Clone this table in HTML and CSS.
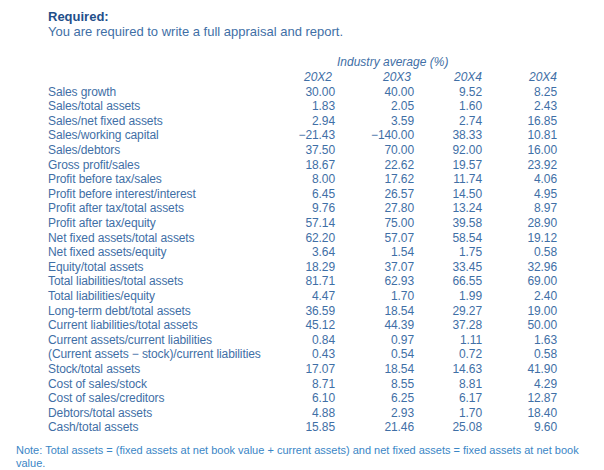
FILE: index.html
```html
<!DOCTYPE html>
<html>
<head>
<meta charset="utf-8">
<link rel="stylesheet" href="styles.css">
</head>
<body>
<div class="page">
  <div class="required">
    <div class="req-title">Required:</div>
    <div class="req-text">You are required to write a full appraisal and report.</div>
  </div>
  <div class="table">
    <div class="caption-row">
      <span class="label"></span>
      <span class="caption">Industry average (%)</span>
    </div>
    <div class="row head">
      <span class="label"></span>
      <span class="num y1">20X2</span><span class="num y2">20X3</span><span class="num">20X4</span><span class="num">20X4</span>
    </div>
    <div class="row"><span class="label">Sales growth</span><span class="num">30.00</span><span class="num">40.00</span><span class="num">9.52</span><span class="num">8.25</span></div>
    <div class="row"><span class="label">Sales/total assets</span><span class="num">1.83</span><span class="num">2.05</span><span class="num">1.60</span><span class="num">2.43</span></div>
    <div class="row"><span class="label">Sales/net fixed assets</span><span class="num">2.94</span><span class="num">3.59</span><span class="num">2.74</span><span class="num">16.85</span></div>
    <div class="row"><span class="label">Sales/working capital</span><span class="num">−21.43</span><span class="num">−140.00</span><span class="num">38.33</span><span class="num">10.81</span></div>
    <div class="row"><span class="label">Sales/debtors</span><span class="num">37.50</span><span class="num">70.00</span><span class="num">92.00</span><span class="num">16.00</span></div>
    <div class="row"><span class="label">Gross profit/sales</span><span class="num">18.67</span><span class="num">22.62</span><span class="num">19.57</span><span class="num">23.92</span></div>
    <div class="row"><span class="label">Profit before tax/sales</span><span class="num">8.00</span><span class="num">17.62</span><span class="num">11.74</span><span class="num">4.06</span></div>
    <div class="row"><span class="label">Profit before interest/interest</span><span class="num">6.45</span><span class="num">26.57</span><span class="num">14.50</span><span class="num">4.95</span></div>
    <div class="row"><span class="label">Profit after tax/total assets</span><span class="num">9.76</span><span class="num">27.80</span><span class="num">13.24</span><span class="num">8.97</span></div>
    <div class="row"><span class="label">Profit after tax/equity</span><span class="num">57.14</span><span class="num">75.00</span><span class="num">39.58</span><span class="num">28.90</span></div>
    <div class="row"><span class="label">Net fixed assets/total assets</span><span class="num">62.20</span><span class="num">57.07</span><span class="num">58.54</span><span class="num">19.12</span></div>
    <div class="row"><span class="label">Net fixed assets/equity</span><span class="num">3.64</span><span class="num">1.54</span><span class="num">1.75</span><span class="num">0.58</span></div>
    <div class="row"><span class="label">Equity/total assets</span><span class="num">18.29</span><span class="num">37.07</span><span class="num">33.45</span><span class="num">32.96</span></div>
    <div class="row"><span class="label">Total liabilities/total assets</span><span class="num">81.71</span><span class="num">62.93</span><span class="num">66.55</span><span class="num">69.00</span></div>
    <div class="row"><span class="label">Total liabilities/equity</span><span class="num">4.47</span><span class="num">1.70</span><span class="num">1.99</span><span class="num">2.40</span></div>
    <div class="row"><span class="label">Long-term debt/total assets</span><span class="num">36.59</span><span class="num">18.54</span><span class="num">29.27</span><span class="num">19.00</span></div>
    <div class="row"><span class="label">Current liabilities/total assets</span><span class="num">45.12</span><span class="num">44.39</span><span class="num">37.28</span><span class="num">50.00</span></div>
    <div class="row"><span class="label">Current assets/current liabilities</span><span class="num">0.84</span><span class="num">0.97</span><span class="num">1.11</span><span class="num">1.63</span></div>
    <div class="row"><span class="label">(Current assets − stock)/current liabilities</span><span class="num">0.43</span><span class="num">0.54</span><span class="num">0.72</span><span class="num">0.58</span></div>
    <div class="row"><span class="label">Stock/total assets</span><span class="num">17.07</span><span class="num">18.54</span><span class="num">14.63</span><span class="num">41.90</span></div>
    <div class="row"><span class="label">Cost of sales/stock</span><span class="num">8.71</span><span class="num">8.55</span><span class="num">8.81</span><span class="num">4.29</span></div>
    <div class="row"><span class="label">Cost of sales/creditors</span><span class="num">6.10</span><span class="num">6.25</span><span class="num">6.17</span><span class="num">12.87</span></div>
    <div class="row"><span class="label">Debtors/total assets</span><span class="num">4.88</span><span class="num">2.93</span><span class="num">1.70</span><span class="num">18.40</span></div>
    <div class="row"><span class="label">Cash/total assets</span><span class="num">15.85</span><span class="num">21.46</span><span class="num">25.08</span><span class="num">9.60</span></div>
  </div>
  <p class="note">Note: Total assets = (fixed assets at net book value + current assets) and net fixed assets = fixed assets at net book value.</p>
</div>
</body>
</html>
```

FILE: styles.css
```css
html, body {
  margin: 0;
  padding: 0;
  background: #ffffff;
}
body {
  font-family: "Liberation Sans", Arial, sans-serif;
  color: #3f6fa6;
}
.page {
  width: 604px;
  height: 470px;
  padding: 10px 0 0 0;
  box-sizing: border-box;
}
.required {
  padding-left: 48px;
}
.req-title {
  font-weight: bold;
  font-size: 13px;
  line-height: 14.7px;
  color: #1f4f8a;
}
.req-text {
  font-size: 13px;
  line-height: 14.7px;
  color: #3f6fa6;
}
.table {
  margin-top: 15.3px;
  padding-left: 48px;
  font-size: 12px;
  letter-spacing: -0.1px;
}
.caption-row,
.row {
  display: grid;
  grid-template-columns: 227px 60px 79px 68px 75px;
  line-height: 14.6px;
  height: 14.6px;
}
.caption-row {
  grid-template-columns: 289px auto;
  height: 15px;
  line-height: 15px;
}
.caption {
  font-style: italic;
  white-space: nowrap;
  letter-spacing: 0;
}
.head {
  font-style: italic;
  height: 15px;
  line-height: 15px;
  letter-spacing: 0;
}
.label {
  white-space: nowrap;
}
.num {
  text-align: right;
  white-space: nowrap;
}
.head .y1,
.head .y2 {
  padding-right: 3px;
}
.note {
  margin: 9px 0 0 16px;
  width: 570px;
  font-size: 11px;
  line-height: 13px;
  color: #3a86c6;
}
```
